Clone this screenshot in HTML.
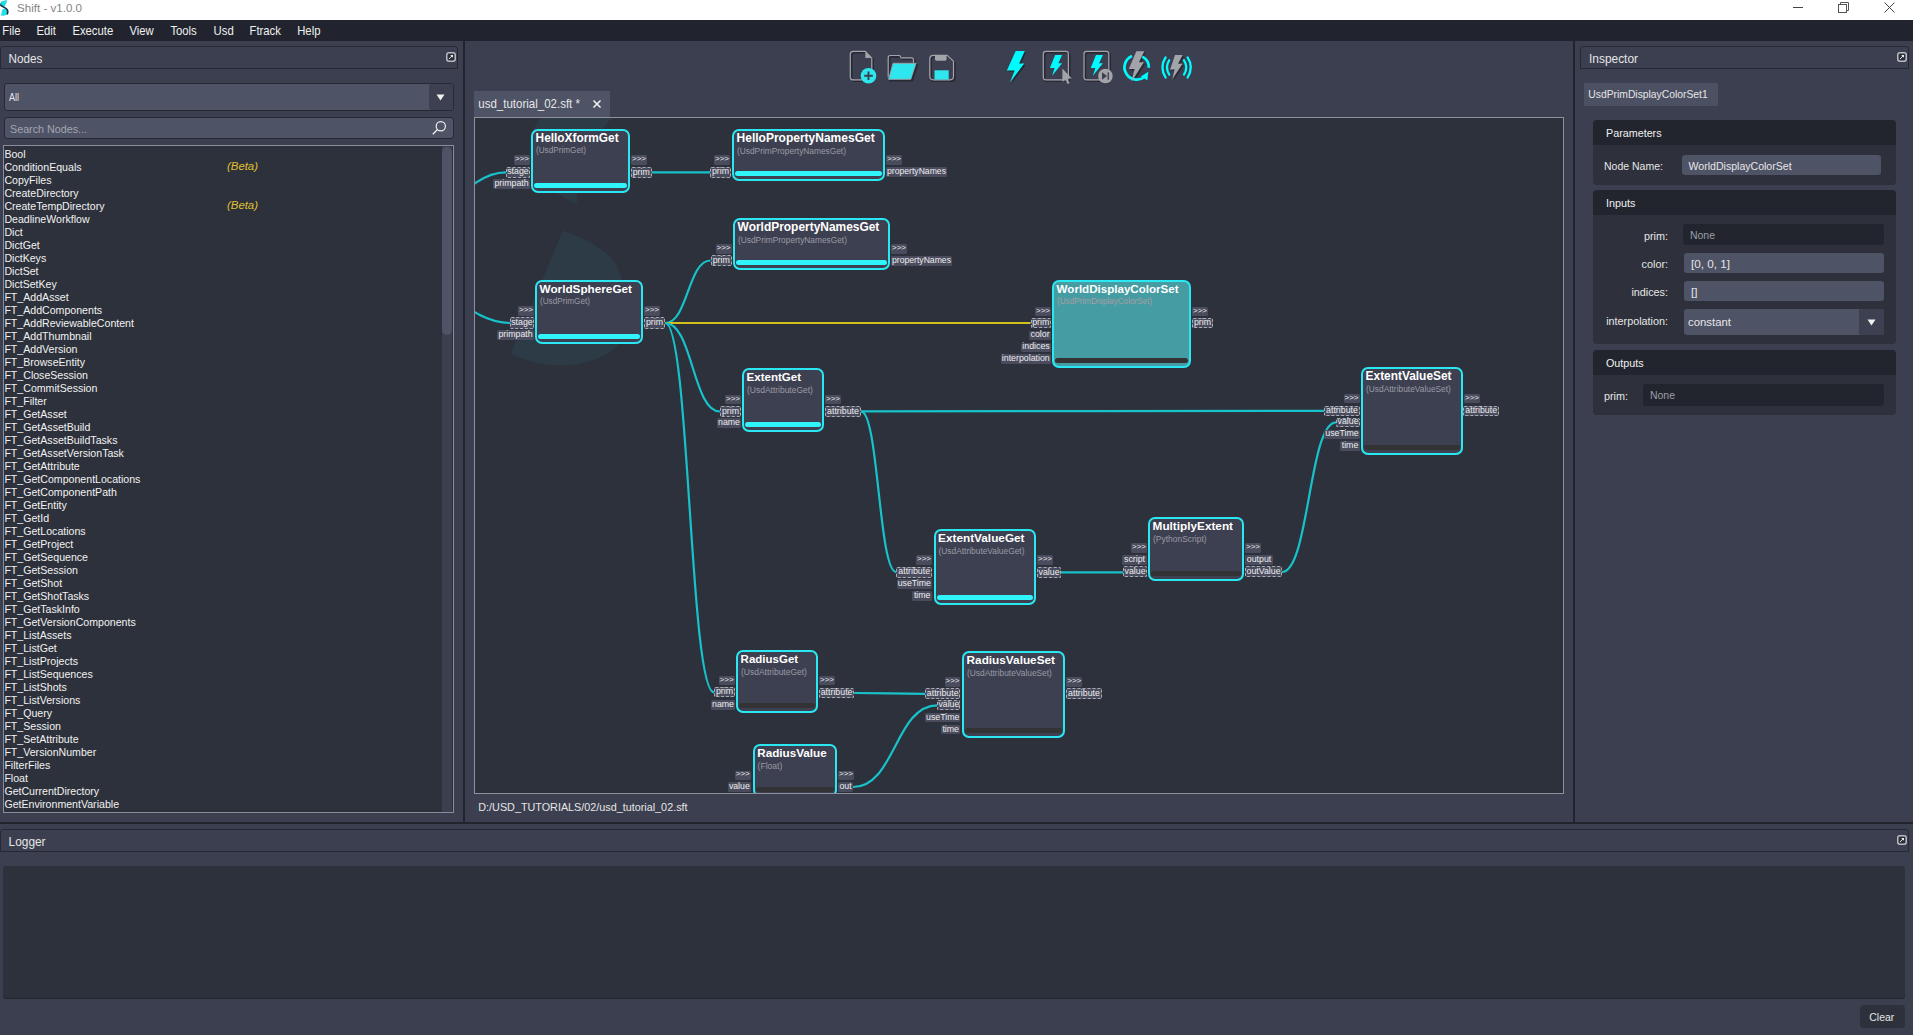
<!DOCTYPE html><html><head><meta charset="utf-8"><style>
html,body{margin:0;padding:0;}
body{width:1913px;height:1035px;position:relative;overflow:hidden;background:#3c3f50;font-family:"Liberation Sans",sans-serif;}
.t{position:absolute;white-space:nowrap;}
.r{position:absolute;}
</style></head><body>
<div class="r" style="left:0px;top:0px;width:1913px;height:20px;background:#ffffff;"></div>
<svg class="r" style="left:0;top:0" width="10" height="17" viewBox="0 0 10 17">
<path d="M1.3 1.2 L6.9 0 L6.6 2.5 L4.6 6.8 L1.2 5.6 L0.9 3 Z" fill="#23dbe6"/>
<path d="M2.4 9.2 L6.2 8.6 L7.9 11.2 L7.2 14.6 L3.2 16.1 L1 15.2 L1.8 11.5 Z" fill="#22e2ec"/>
<path d="M0 4.6 C2 7.2 7.2 7.6 7.7 10.8 C7.9 12.5 7.5 13.6 7 14.4" fill="none" stroke="#1d2f3a" stroke-width="1.6"/>
<path d="M0 3 L1.5 3.5 L1.2 5.6 L0 5.2 Z" fill="#1b8f98"/>
</svg>
<div class="t" style="left:17.00px;top:3.10px;font-size:11.58px;line-height:11.58px;color:#858585;">Shift - v1.0.0</div>
<svg class="r" style="left:1785px;top:0" width="120" height="20" viewBox="0 0 120 20">
<line x1="8" y1="7.5" x2="18" y2="7.5" stroke="#444" stroke-width="1"/>
<rect x="53.5" y="4.5" width="8" height="8" fill="none" stroke="#555" stroke-width="1"/>
<path d="M55.5 4.5 V2.5 H63.5 V10.5 H61.5" fill="none" stroke="#555" stroke-width="1"/>
<path d="M99.5 2.5 L109.5 12.5 M109.5 2.5 L99.5 12.5" stroke="#444" stroke-width="1"/>
</svg>
<div class="r" style="left:0px;top:20px;width:1913px;height:21px;background:#21242e;"></div>
<div class="t" style="left:2.30px;top:25.53px;font-size:11.30px;line-height:11.30px;color:#f0f0f0;transform:scale(1.000,1.1);transform-origin:0 9.57px;">File</div>
<div class="t" style="left:36.40px;top:25.53px;font-size:11.30px;line-height:11.30px;color:#f0f0f0;transform:scale(1.000,1.1);transform-origin:0 9.57px;">Edit</div>
<div class="t" style="left:72.40px;top:25.53px;font-size:11.30px;line-height:11.30px;color:#f0f0f0;transform:scale(1.000,1.1);transform-origin:0 9.57px;">Execute</div>
<div class="t" style="left:129.40px;top:25.53px;font-size:11.30px;line-height:11.30px;color:#f0f0f0;transform:scale(1.000,1.1);transform-origin:0 9.57px;">View</div>
<div class="t" style="left:170.40px;top:25.53px;font-size:11.30px;line-height:11.30px;color:#f0f0f0;transform:scale(1.000,1.1);transform-origin:0 9.57px;">Tools</div>
<div class="t" style="left:213.60px;top:25.53px;font-size:11.30px;line-height:11.30px;color:#f0f0f0;transform:scale(1.000,1.1);transform-origin:0 9.57px;">Usd</div>
<div class="t" style="left:249.50px;top:25.53px;font-size:11.30px;line-height:11.30px;color:#f0f0f0;transform:scale(1.000,1.1);transform-origin:0 9.57px;">Ftrack</div>
<div class="t" style="left:297.20px;top:25.53px;font-size:11.30px;line-height:11.30px;color:#f0f0f0;transform:scale(1.000,1.1);transform-origin:0 9.57px;">Help</div>
<div class="r" style="left:463px;top:41px;width:2px;height:781px;background:#21242d;"></div>
<div class="r" style="left:1573px;top:41px;width:2px;height:781px;background:#21242d;"></div>
<div class="r" style="left:0px;top:822px;width:1913px;height:2px;background:#21242d;"></div>
<div class="r" style="left:0px;top:46px;width:456px;height:21px;border:1px solid #262833;border-radius:3px 3px 0 0;"></div>
<div class="t" style="left:8.60px;top:53.20px;font-size:11.69px;line-height:11.69px;color:#e6e6e6;transform:scale(1.000,1.1);transform-origin:0 9.90px;">Nodes</div>
<svg class="r" style="left:446px;top:52px" width="10" height="10" viewBox="0 0 10 10"><rect x="0.75" y="0.75" width="8.5" height="8.5" rx="2.2" fill="#2c2e39" stroke="#babcc3" stroke-width="1.5"/><path d="M2.9 7.1 L6.2 3.8" fill="none" stroke="#e6e6ea" stroke-width="1"/><path d="M4.2 3 H7 V5.8 Z" fill="#e8f0ee"/></svg>
<div class="r" style="left:4px;top:83px;width:448px;height:26px;border:1px solid #262833;border-radius:3px;background:#4f5366;overflow:hidden"><div class="r" style="left:424px;top:0;width:24px;height:26px;border-radius:3px 0 0 3px;background:#3d4051"></div></div>
<svg class="r" style="left:436px;top:94px" width="9" height="7" viewBox="0 0 9 7"><path d="M0.5 0.5 H8.5 L4.5 6.5 Z" fill="#f0f0f0"/></svg>
<div class="t" style="left:9.20px;top:92.15px;font-size:11.52px;line-height:11.52px;color:#e6e6e6;transform:scale(0.789,1.0);transform-origin:0 9.75px;">All</div>
<div class="r" style="left:4px;top:117px;width:448px;height:20px;border:1px solid #262833;border-radius:3px;background:#4f5366"></div>
<div class="t" style="left:10.30px;top:123.51px;font-size:10.97px;line-height:10.97px;color:#a3a6b0;transform:scale(0.979,1.0);transform-origin:0 9.29px;">Search Nodes...</div>
<svg class="r" style="left:431px;top:120px" width="16" height="16" viewBox="0 0 16 16"><circle cx="9.8" cy="6.2" r="4.6" fill="none" stroke="#f0f0f0" stroke-width="1.2"/><line x1="6.5" y1="9.5" x2="1.8" y2="14.2" stroke="#f0f0f0" stroke-width="1.3"/></svg>
<div class="r" style="left:3px;top:145px;width:449px;height:666px;border:1px solid #8a8d97;background:#2d313b"></div>
<div class="r" style="left:442px;top:146px;width:10px;height:666px;background:#3c3f50;"></div>
<div class="r" style="left:442px;top:147px;width:10px;height:188px;border-radius:5px;background:#4f5366"></div>
<div class="t" style="left:4.40px;top:149.03px;font-size:10.60px;line-height:10.60px;color:#f2f2f2;letter-spacing:0px;">Bool</div>
<div class="t" style="left:4.40px;top:162.03px;font-size:10.60px;line-height:10.60px;color:#f2f2f2;letter-spacing:0px;">ConditionEquals</div>
<div class="t" style="left:4.40px;top:175.03px;font-size:10.60px;line-height:10.60px;color:#f2f2f2;letter-spacing:0px;">CopyFiles</div>
<div class="t" style="left:4.40px;top:188.03px;font-size:10.60px;line-height:10.60px;color:#f2f2f2;letter-spacing:0px;">CreateDirectory</div>
<div class="t" style="left:4.40px;top:201.03px;font-size:10.60px;line-height:10.60px;color:#f2f2f2;letter-spacing:0px;">CreateTempDirectory</div>
<div class="t" style="left:4.40px;top:214.03px;font-size:10.60px;line-height:10.60px;color:#f2f2f2;letter-spacing:0px;">DeadlineWorkflow</div>
<div class="t" style="left:4.40px;top:227.03px;font-size:10.60px;line-height:10.60px;color:#f2f2f2;letter-spacing:0px;">Dict</div>
<div class="t" style="left:4.40px;top:240.03px;font-size:10.60px;line-height:10.60px;color:#f2f2f2;letter-spacing:0px;">DictGet</div>
<div class="t" style="left:4.40px;top:253.03px;font-size:10.60px;line-height:10.60px;color:#f2f2f2;letter-spacing:0px;">DictKeys</div>
<div class="t" style="left:4.40px;top:266.03px;font-size:10.60px;line-height:10.60px;color:#f2f2f2;letter-spacing:0px;">DictSet</div>
<div class="t" style="left:4.40px;top:279.03px;font-size:10.60px;line-height:10.60px;color:#f2f2f2;letter-spacing:0px;">DictSetKey</div>
<div class="t" style="left:4.40px;top:292.03px;font-size:10.60px;line-height:10.60px;color:#f2f2f2;letter-spacing:0px;">FT_AddAsset</div>
<div class="t" style="left:4.40px;top:305.03px;font-size:10.60px;line-height:10.60px;color:#f2f2f2;letter-spacing:0px;">FT_AddComponents</div>
<div class="t" style="left:4.40px;top:318.03px;font-size:10.60px;line-height:10.60px;color:#f2f2f2;letter-spacing:0px;">FT_AddReviewableContent</div>
<div class="t" style="left:4.40px;top:331.03px;font-size:10.60px;line-height:10.60px;color:#f2f2f2;letter-spacing:0px;">FT_AddThumbnail</div>
<div class="t" style="left:4.40px;top:344.03px;font-size:10.60px;line-height:10.60px;color:#f2f2f2;letter-spacing:0px;">FT_AddVersion</div>
<div class="t" style="left:4.40px;top:357.03px;font-size:10.60px;line-height:10.60px;color:#f2f2f2;letter-spacing:0px;">FT_BrowseEntity</div>
<div class="t" style="left:4.40px;top:370.03px;font-size:10.60px;line-height:10.60px;color:#f2f2f2;letter-spacing:0px;">FT_CloseSession</div>
<div class="t" style="left:4.40px;top:383.03px;font-size:10.60px;line-height:10.60px;color:#f2f2f2;letter-spacing:0px;">FT_CommitSession</div>
<div class="t" style="left:4.40px;top:396.03px;font-size:10.60px;line-height:10.60px;color:#f2f2f2;letter-spacing:0px;">FT_Filter</div>
<div class="t" style="left:4.40px;top:409.03px;font-size:10.60px;line-height:10.60px;color:#f2f2f2;letter-spacing:0px;">FT_GetAsset</div>
<div class="t" style="left:4.40px;top:422.03px;font-size:10.60px;line-height:10.60px;color:#f2f2f2;letter-spacing:0px;">FT_GetAssetBuild</div>
<div class="t" style="left:4.40px;top:435.03px;font-size:10.60px;line-height:10.60px;color:#f2f2f2;letter-spacing:0px;">FT_GetAssetBuildTasks</div>
<div class="t" style="left:4.40px;top:448.03px;font-size:10.60px;line-height:10.60px;color:#f2f2f2;letter-spacing:0px;">FT_GetAssetVersionTask</div>
<div class="t" style="left:4.40px;top:461.03px;font-size:10.60px;line-height:10.60px;color:#f2f2f2;letter-spacing:0px;">FT_GetAttribute</div>
<div class="t" style="left:4.40px;top:474.03px;font-size:10.60px;line-height:10.60px;color:#f2f2f2;letter-spacing:0px;">FT_GetComponentLocations</div>
<div class="t" style="left:4.40px;top:487.03px;font-size:10.60px;line-height:10.60px;color:#f2f2f2;letter-spacing:0px;">FT_GetComponentPath</div>
<div class="t" style="left:4.40px;top:500.03px;font-size:10.60px;line-height:10.60px;color:#f2f2f2;letter-spacing:0px;">FT_GetEntity</div>
<div class="t" style="left:4.40px;top:513.03px;font-size:10.60px;line-height:10.60px;color:#f2f2f2;letter-spacing:0px;">FT_GetId</div>
<div class="t" style="left:4.40px;top:526.03px;font-size:10.60px;line-height:10.60px;color:#f2f2f2;letter-spacing:0px;">FT_GetLocations</div>
<div class="t" style="left:4.40px;top:539.03px;font-size:10.60px;line-height:10.60px;color:#f2f2f2;letter-spacing:0px;">FT_GetProject</div>
<div class="t" style="left:4.40px;top:552.03px;font-size:10.60px;line-height:10.60px;color:#f2f2f2;letter-spacing:0px;">FT_GetSequence</div>
<div class="t" style="left:4.40px;top:565.03px;font-size:10.60px;line-height:10.60px;color:#f2f2f2;letter-spacing:0px;">FT_GetSession</div>
<div class="t" style="left:4.40px;top:578.03px;font-size:10.60px;line-height:10.60px;color:#f2f2f2;letter-spacing:0px;">FT_GetShot</div>
<div class="t" style="left:4.40px;top:591.03px;font-size:10.60px;line-height:10.60px;color:#f2f2f2;letter-spacing:0px;">FT_GetShotTasks</div>
<div class="t" style="left:4.40px;top:604.03px;font-size:10.60px;line-height:10.60px;color:#f2f2f2;letter-spacing:0px;">FT_GetTaskInfo</div>
<div class="t" style="left:4.40px;top:617.03px;font-size:10.60px;line-height:10.60px;color:#f2f2f2;letter-spacing:0px;">FT_GetVersionComponents</div>
<div class="t" style="left:4.40px;top:630.03px;font-size:10.60px;line-height:10.60px;color:#f2f2f2;letter-spacing:0px;">FT_ListAssets</div>
<div class="t" style="left:4.40px;top:643.03px;font-size:10.60px;line-height:10.60px;color:#f2f2f2;letter-spacing:0px;">FT_ListGet</div>
<div class="t" style="left:4.40px;top:656.03px;font-size:10.60px;line-height:10.60px;color:#f2f2f2;letter-spacing:0px;">FT_ListProjects</div>
<div class="t" style="left:4.40px;top:669.03px;font-size:10.60px;line-height:10.60px;color:#f2f2f2;letter-spacing:0px;">FT_ListSequences</div>
<div class="t" style="left:4.40px;top:682.03px;font-size:10.60px;line-height:10.60px;color:#f2f2f2;letter-spacing:0px;">FT_ListShots</div>
<div class="t" style="left:4.40px;top:695.03px;font-size:10.60px;line-height:10.60px;color:#f2f2f2;letter-spacing:0px;">FT_ListVersions</div>
<div class="t" style="left:4.40px;top:708.03px;font-size:10.60px;line-height:10.60px;color:#f2f2f2;letter-spacing:0px;">FT_Query</div>
<div class="t" style="left:4.40px;top:721.03px;font-size:10.60px;line-height:10.60px;color:#f2f2f2;letter-spacing:0px;">FT_Session</div>
<div class="t" style="left:4.40px;top:734.03px;font-size:10.60px;line-height:10.60px;color:#f2f2f2;letter-spacing:0px;">FT_SetAttribute</div>
<div class="t" style="left:4.40px;top:747.03px;font-size:10.60px;line-height:10.60px;color:#f2f2f2;letter-spacing:0px;">FT_VersionNumber</div>
<div class="t" style="left:4.40px;top:760.03px;font-size:10.60px;line-height:10.60px;color:#f2f2f2;letter-spacing:0px;">FilterFiles</div>
<div class="t" style="left:4.40px;top:773.03px;font-size:10.60px;line-height:10.60px;color:#f2f2f2;letter-spacing:0px;">Float</div>
<div class="t" style="left:4.40px;top:786.03px;font-size:10.60px;line-height:10.60px;color:#f2f2f2;letter-spacing:0px;">GetCurrentDirectory</div>
<div class="t" style="left:4.40px;top:799.03px;font-size:10.60px;line-height:10.60px;color:#f2f2f2;letter-spacing:0px;">GetEnvironmentVariable</div>
<div class="t" style="left:227.00px;top:161.37px;font-size:11.38px;line-height:11.38px;color:#e0c030;font-style:italic;">(Beta)</div>
<div class="t" style="left:227.00px;top:200.37px;font-size:11.38px;line-height:11.38px;color:#e0c030;font-style:italic;">(Beta)</div>
<svg class="r" style="left:845px;top:45px" width="360" height="45" viewBox="845 45 360 45">
<g transform="translate(1.4,1.4)" fill="none" stroke="#22242d" stroke-width="1.6" opacity="0.8">
<path d="M853.3 51.3 H865.4 L871.8 57.9 V76.9 Q871.8 79.9 868.8 79.9 H853.3 Q850.3 79.9 850.3 76.9 V54.3 Q850.3 51.3 853.3 51.3 Z"/>
<path d="M888.2 77.3 V57.5 Q888.2 55.5 890.2 55.5 H899.7 L901.2 57.9 H911.5 Q913.5 57.9 913.5 59.9 V62.7"/>
<path d="M893.1 63.3 H916 L910.8 79.3 H888.6 Z" fill="#22242d"/>
<path d="M933.3 55.3 H947.2 L953.5 61.2 V76.3 Q953.5 79.8 950 79.8 H933.3 Q929.8 79.8 929.8 76.3 V58.8 Q929.8 55.3 933.3 55.3 Z"/>
<path d="M1015.7 51 L1024.8 51 L1019.1 63.5 L1024.2 63.5 L1010 82.6 L1014.7 70.4 L1006.9 70.4 Z" fill="#22242d" stroke="none"/>
<rect x="1043.3" y="51.3" width="25.1" height="28.5" rx="2.5"/>
<rect x="1084" y="51.3" width="24.8" height="28.5" rx="2.5"/>
<path d="M1136.3 51.2 L1144.3 51.2 L1139 62.3 L1143.9 62.3 L1131.4 81.9 L1134.6 69 L1128.8 69 Z" fill="#22242d" stroke="none"/>
<path d="M1175 55 L1182.6 55 L1178.1 63.7 L1182.6 63.7 L1172.3 79.2 L1174.6 69.4 L1170.1 69.4 Z" fill="#22242d" stroke="none"/>
</g>
<!-- new file -->
<path d="M853.3 51.3 H865.4 L871.8 57.9 V76.9 Q871.8 79.9 868.8 79.9 H853.3 Q850.3 79.9 850.3 76.9 V54.3 Q850.3 51.3 853.3 51.3 Z" fill="none" stroke="#a3a3aa" stroke-width="1.2"/>
<path d="M865.4 51.6 V58 H871.6 Z" fill="#a3a3aa"/>
<circle cx="868.5" cy="75.8" r="7.8" fill="#2ee6ee"/>
<path d="M868.5 71.5 V80.1 M864.2 75.8 H872.8" stroke="#3c3f50" stroke-width="1.9"/>
<!-- folder -->
<path d="M888.2 77.3 V57.5 Q888.2 55.5 890.2 55.5 H899.7 L901.2 57.9 H911.5 Q913.5 57.9 913.5 59.9 V62.7" fill="none" stroke="#a3a3aa" stroke-width="1.2"/>
<path d="M893.1 63.3 H916 L910.8 79.3 H888.6 Z" fill="#2ee6ee" stroke="#a3a3aa" stroke-width="0.9" stroke-linejoin="round"/>
<!-- save -->
<path d="M933.3 55.3 H947.2 L953.5 61.2 V76.3 Q953.5 79.8 950 79.8 H933.3 Q929.8 79.8 929.8 76.3 V58.8 Q929.8 55.3 933.3 55.3 Z" fill="none" stroke="#a3a3aa" stroke-width="1.2"/>
<path d="M934.9 55.3 H946.6 V59 Q946.6 60.8 944.8 60.8 H936.7 Q934.9 60.8 934.9 59 Z" fill="#a3a3aa"/>
<rect x="934.5" y="70.3" width="14.2" height="9.2" fill="#2ee6ee"/>
<!-- lightning -->
<path d="M1015.7 51 L1024.8 51 L1019.1 63.5 L1024.2 63.5 L1010 82.6 L1014.7 70.4 L1006.9 70.4 Z" fill="#00fbff"/>
<!-- box lightning cursor -->
<rect x="1043.3" y="51.3" width="25.1" height="28.5" rx="2.5" fill="none" stroke="#a3a3aa" stroke-width="1.2"/>
<path d="M1055.2 55 L1062.1 55 L1058.3 63.2 L1062.1 63.2 L1052.1 75.7 L1054.6 67.9 L1049.9 67.9 Z" fill="#00fbff"/>
<path d="M1062.4 68.5 V82 L1065.3 79.3 L1067.6 84 L1069.6 83 L1067.4 78.5 L1071.8 78.5 Z" fill="#a3a3aa"/>
<!-- box lightning play -->
<rect x="1084" y="51.3" width="24.8" height="28.5" rx="2.5" fill="none" stroke="#a3a3aa" stroke-width="1.2"/>
<g transform="translate(40.8,0)"><path d="M1055.2 55 L1062.1 55 L1058.3 63.2 L1062.1 63.2 L1052.1 75.7 L1054.6 67.9 L1049.9 67.9 Z" fill="#00fbff"/></g>
<circle cx="1105.4" cy="76" r="7.3" fill="#a3a3aa"/>
<path d="M1102 72.3 V79.8 L1107 76 Z" fill="#3c3f50"/>
<rect x="1107.6" y="72.3" width="1.3" height="7.5" fill="#3c3f50"/>
<!-- circular -->
<path d="M1142.3 56.6 A12.2 12.2 0 0 1 1148.8 67.8" fill="none" stroke="#00fbff" stroke-width="2.7"/>
<path d="M1132.0 56.1 A12.2 12.2 0 1 0 1145.7 75.6" fill="none" stroke="#00fbff" stroke-width="2.7"/>
<path d="M1148.3 71.8 L1147.4 80.3 L1140.8 76.6 Z" fill="#00fbff"/>
<path d="M1136.3 51.2 L1144.3 51.2 L1139 62.3 L1143.9 62.3 L1131.4 81.9 L1134.6 69 L1128.8 69 Z" fill="#a3a3aa"/>
<!-- radio -->
<path d="M1165.6 57.4 Q1159.2 67.2 1165.6 77.5" fill="none" stroke="#00fbff" stroke-width="2.3" stroke-linecap="round"/>
<path d="M1169.2 60.3 Q1164.6 67 1169.2 74.6" fill="none" stroke="#00fbff" stroke-width="2.3" stroke-linecap="round"/>
<path d="M1187.6 57.4 Q1194 67.2 1187.6 77.5" fill="none" stroke="#00fbff" stroke-width="2.3" stroke-linecap="round"/>
<path d="M1184 60.3 Q1188.6 67 1184 74.6" fill="none" stroke="#00fbff" stroke-width="2.3" stroke-linecap="round"/>
<path d="M1175 55 L1182.6 55 L1178.1 63.7 L1182.6 63.7 L1172.3 79.2 L1174.6 69.4 L1170.1 69.4 Z" fill="#a3a3aa"/>
</svg>
<div class="r" style="left:474px;top:91px;width:136px;height:26px;background:#4f5366;"></div>
<div class="t" style="left:478.30px;top:98.86px;font-size:11.51px;line-height:11.51px;color:#e6e6e6;transform:scale(1.000,1.05);transform-origin:0 9.74px;">usd_tutorial_02.sft *</div>
<svg class="r" style="left:592px;top:99px" width="10" height="10" viewBox="0 0 10 10"><path d="M1.5 1.5 L8.5 8.5 M8.5 1.5 L1.5 8.5" stroke="#f4f4f4" stroke-width="1.5"/></svg>
<div class="r" style="left:474px;top:117px;width:1088px;height:675px;border:1px solid #8e919b;background:#2d313b;overflow:hidden"><svg class="r" style="left:0;top:0" width="1088" height="675" viewBox="0 0 1088 675"><g transform="translate(-475,-118)" fill="#2c3b46"><path d="M541 118 C522 140 522 180 577 204 C576 170 592 140 612 118 Z"/><path d="M563 230.5 C585 238 610 252 617 266 C628 290 632 320 622 340 C612 356 585 366 558 365.5 C540 365 522 360 511 353 Z"/></g></svg>
<svg class="r" style="left:0;top:0" width="1088" height="675"><path d="M177.0 54.3 C206.0 54.3 206.0 54.3 235.0 54.3" stroke="#17c2ca" stroke-width="2.2" fill="none"/><path d="M190.2 205.0 C212.9 205.0 212.9 142.5 235.5 142.5" stroke="#17c2ca" stroke-width="2.2" fill="none"/><path d="M190.2 205.0 C372.9 205.0 372.9 205.0 555.5 205.0" stroke="#d2c01e" stroke-width="2.2" fill="none"/><path d="M190.2 205.0 C217.6 205.0 217.6 293.5 245.0 293.5" stroke="#17c2ca" stroke-width="2.2" fill="none"/><path d="M190.2 205.0 C214.6 205.0 214.6 574.3 239.0 574.3" stroke="#17c2ca" stroke-width="2.2" fill="none"/><path d="M386.0 293.3 C617.5 293.3 617.5 292.8 849.0 292.8" stroke="#17c2ca" stroke-width="2.2" fill="none"/><path d="M386.0 293.3 C403.6 293.3 403.6 454.0 421.3 454.0" stroke="#17c2ca" stroke-width="2.2" fill="none"/><path d="M586.0 454.3 C617.0 454.3 617.0 454.3 648.0 454.3" stroke="#17c2ca" stroke-width="2.2" fill="none"/><path d="M807.0 454.0 C834.0 454.0 834.0 304.3 861.0 304.3" stroke="#17c2ca" stroke-width="2.2" fill="none"/><path d="M379.2 575.0 C414.6 575.0 414.6 575.8 450.0 575.8" stroke="#17c2ca" stroke-width="2.2" fill="none"/><path d="M378.0 669.0 C420.2 669.0 420.2 587.3 462.4 587.3" stroke="#17c2ca" stroke-width="2.2" fill="none"/><path d="M-35 97 C-5 67 10 54.30000000000001 31 54.30000000000001" stroke="#17c2ca" stroke-width="2.2" fill="none"/><path d="M-30 172 C-5 194 15 205 35 205" stroke="#17c2ca" stroke-width="2.2" fill="none"/></svg>
<div class="r" style="left:56.0px;top:11.0px;width:95.0px;height:60.0px;border:2px solid #2ae8f2;border-radius:7px;background:#3d4050"></div>
<div class="r" style="left:59.0px;top:65.2px;width:93.0px;height:5px;border-radius:3px;background:#30f4fc"></div>
<div class="t" style="left:60.6px;top:13.0px;font-size:11.86px;line-height:14px;font-weight:bold;color:#ffffff">HelloXformGet</div>
<div class="t" style="left:61.0px;top:27.5px;font-size:8.18px;line-height:10px;color:#9a9ba6">(UsdPrimGet)</div>
<div class="r" style="left:39.0px;top:37.0px;width:16.0px;height:10.0px;background:#4a4c5d;border-radius:1.5px;"></div>
<div class="t" style="left:40.0px;top:36.0px;font-size:7.99px;line-height:10px;color:#ececf0">&gt;&gt;&gt;</div>
<div class="r" style="left:31.0px;top:49.0px;width:22.0px;height:8.5px;background:#4a4c5d;border-radius:1.5px;border:1px dashed #a9abb3;"></div>
<div class="t" style="left:32.2px;top:48.2px;font-size:8.80px;line-height:10px;color:#ececf0">stage</div>
<div class="r" style="left:18.0px;top:61.0px;width:37.0px;height:10.0px;background:#4a4c5d;border-radius:1.5px;"></div>
<div class="t" style="left:19.4px;top:60.0px;font-size:8.80px;line-height:10px;color:#ececf0">primpath</div>
<div class="r" style="left:156.0px;top:37.0px;width:16.0px;height:10.0px;background:#4a4c5d;border-radius:1.5px;"></div>
<div class="t" style="left:157.0px;top:36.0px;font-size:7.99px;line-height:10px;color:#ececf0">&gt;&gt;&gt;</div>
<div class="r" style="left:155.5px;top:49.0px;width:19.5px;height:9.0px;background:#4a4c5d;border-radius:1.5px;border:1px dashed #a9abb3;"></div>
<div class="t" style="left:157.7px;top:48.5px;font-size:8.80px;line-height:10px;color:#ececf0">prim</div>
<div class="r" style="left:257.0px;top:11.0px;width:149.0px;height:48.0px;border:2px solid #2ae8f2;border-radius:7px;background:#3d4050"></div>
<div class="r" style="left:260.0px;top:53.2px;width:147.0px;height:5px;border-radius:3px;background:#30f4fc"></div>
<div class="t" style="left:261.6px;top:13.0px;font-size:12.0px;line-height:14px;font-weight:bold;color:#ffffff">HelloPropertyNamesGet</div>
<div class="t" style="left:262.0px;top:27.5px;font-size:8.35px;line-height:10px;color:#9a9ba6">(UsdPrimPropertyNamesGet)</div>
<div class="r" style="left:239.0px;top:37.0px;width:16.0px;height:10.0px;background:#4a4c5d;border-radius:1.5px;"></div>
<div class="t" style="left:240.0px;top:36.0px;font-size:7.99px;line-height:10px;color:#ececf0">&gt;&gt;&gt;</div>
<div class="r" style="left:235.0px;top:48.5px;width:19.0px;height:9.0px;background:#4a4c5d;border-radius:1.5px;border:1px dashed #a9abb3;"></div>
<div class="t" style="left:236.9px;top:48.0px;font-size:8.80px;line-height:10px;color:#ececf0">prim</div>
<div class="r" style="left:411.0px;top:37.0px;width:16.0px;height:10.0px;background:#4a4c5d;border-radius:1.5px;"></div>
<div class="t" style="left:412.0px;top:36.0px;font-size:7.99px;line-height:10px;color:#ececf0">&gt;&gt;&gt;</div>
<div class="r" style="left:411.0px;top:49.0px;width:61.0px;height:10.0px;background:#4a4c5d;border-radius:1.5px;"></div>
<div class="t" style="left:412.0px;top:48.0px;font-size:8.63px;line-height:10px;color:#ececf0">propertyNames</div>
<div class="r" style="left:258.0px;top:100.0px;width:153.0px;height:48.0px;border:2px solid #2ae8f2;border-radius:7px;background:#3d4050"></div>
<div class="r" style="left:261.0px;top:142.2px;width:151.0px;height:5px;border-radius:3px;background:#30f4fc"></div>
<div class="t" style="left:262.6px;top:102.0px;font-size:11.94px;line-height:14px;font-weight:bold;color:#ffffff">WorldPropertyNamesGet</div>
<div class="t" style="left:263.0px;top:116.5px;font-size:8.35px;line-height:10px;color:#9a9ba6">(UsdPrimPropertyNamesGet)</div>
<div class="r" style="left:240.5px;top:126.0px;width:16.0px;height:10.0px;background:#4a4c5d;border-radius:1.5px;"></div>
<div class="t" style="left:241.5px;top:125.0px;font-size:7.99px;line-height:10px;color:#ececf0">&gt;&gt;&gt;</div>
<div class="r" style="left:235.5px;top:137.0px;width:19.5px;height:9.0px;background:#4a4c5d;border-radius:1.5px;border:1px dashed #a9abb3;"></div>
<div class="t" style="left:237.7px;top:136.5px;font-size:8.80px;line-height:10px;color:#ececf0">prim</div>
<div class="r" style="left:416.0px;top:126.0px;width:16.0px;height:10.0px;background:#4a4c5d;border-radius:1.5px;"></div>
<div class="t" style="left:417.0px;top:125.0px;font-size:7.99px;line-height:10px;color:#ececf0">&gt;&gt;&gt;</div>
<div class="r" style="left:416.0px;top:138.0px;width:61.0px;height:10.0px;background:#4a4c5d;border-radius:1.5px;"></div>
<div class="t" style="left:417.0px;top:137.0px;font-size:8.63px;line-height:10px;color:#ececf0">propertyNames</div>
<div class="r" style="left:60.0px;top:162.0px;width:104.0px;height:60.0px;border:2px solid #2ae8f2;border-radius:7px;background:#3d4050"></div>
<div class="r" style="left:63.0px;top:216.2px;width:102.0px;height:5px;border-radius:3px;background:#30f4fc"></div>
<div class="t" style="left:64.6px;top:164.0px;font-size:11.74px;line-height:14px;font-weight:bold;color:#ffffff">WorldSphereGet</div>
<div class="t" style="left:65.0px;top:178.5px;font-size:8.18px;line-height:10px;color:#9a9ba6">(UsdPrimGet)</div>
<div class="r" style="left:43.0px;top:188.0px;width:16.0px;height:9.5px;background:#4a4c5d;border-radius:1.5px;"></div>
<div class="t" style="left:44.0px;top:186.8px;font-size:7.99px;line-height:10px;color:#ececf0">&gt;&gt;&gt;</div>
<div class="r" style="left:35.0px;top:199.0px;width:22.0px;height:10.0px;background:#4a4c5d;border-radius:1.5px;border:1px dashed #a9abb3;"></div>
<div class="t" style="left:36.2px;top:199.0px;font-size:8.80px;line-height:10px;color:#ececf0">stage</div>
<div class="r" style="left:22.0px;top:212.0px;width:37.0px;height:10.0px;background:#4a4c5d;border-radius:1.5px;"></div>
<div class="t" style="left:23.4px;top:211.0px;font-size:8.80px;line-height:10px;color:#ececf0">primpath</div>
<div class="r" style="left:169.0px;top:188.0px;width:16.0px;height:9.5px;background:#4a4c5d;border-radius:1.5px;"></div>
<div class="t" style="left:170.0px;top:186.8px;font-size:7.99px;line-height:10px;color:#ececf0">&gt;&gt;&gt;</div>
<div class="r" style="left:169.0px;top:199.0px;width:19.0px;height:10.0px;background:#4a4c5d;border-radius:1.5px;border:1px dashed #a9abb3;"></div>
<div class="t" style="left:170.9px;top:199.0px;font-size:8.80px;line-height:10px;color:#ececf0">prim</div>
<div class="r" style="left:577.0px;top:162.0px;width:135.0px;height:84.0px;border:2px solid #2ae8f2;border-radius:7px;background:#459ca2"></div>
<div class="r" style="left:580.0px;top:240.2px;width:133.0px;height:5px;border-radius:3px;background:#333336"></div>
<div class="t" style="left:581.6px;top:164.0px;font-size:11.58px;line-height:14px;font-weight:bold;color:#ffffff">WorldDisplayColorSet</div>
<div class="t" style="left:582.0px;top:178.5px;font-size:8.17px;line-height:10px;color:#a89ea4">(UsdPrimDisplayColorSet)</div>
<div class="r" style="left:560.0px;top:189.0px;width:16.0px;height:9.0px;background:#4a4c5d;border-radius:1.5px;"></div>
<div class="t" style="left:561.0px;top:187.5px;font-size:7.99px;line-height:10px;color:#ececf0">&gt;&gt;&gt;</div>
<div class="r" style="left:555.5px;top:200.0px;width:18.5px;height:8.0px;background:#4a4c5d;border-radius:1.5px;border:1px dashed #a9abb3;"></div>
<div class="t" style="left:557.2px;top:199.0px;font-size:8.80px;line-height:10px;color:#ececf0">prim</div>
<div class="r" style="left:554.0px;top:212.5px;width:22.0px;height:9.5px;background:#4a4c5d;border-radius:1.5px;"></div>
<div class="t" style="left:555.5px;top:211.2px;font-size:8.80px;line-height:10px;color:#ececf0">color</div>
<div class="r" style="left:546.0px;top:224.5px;width:30.0px;height:9.5px;background:#4a4c5d;border-radius:1.5px;"></div>
<div class="t" style="left:547.3px;top:223.2px;font-size:8.80px;line-height:10px;color:#ececf0">indices</div>
<div class="r" style="left:525.5px;top:236.3px;width:50.5px;height:9.5px;background:#4a4c5d;border-radius:1.5px;"></div>
<div class="t" style="left:526.8px;top:235.1px;font-size:8.80px;line-height:10px;color:#ececf0">interpolation</div>
<div class="r" style="left:717.0px;top:189.0px;width:16.0px;height:9.0px;background:#4a4c5d;border-radius:1.5px;"></div>
<div class="t" style="left:718.0px;top:187.5px;font-size:7.99px;line-height:10px;color:#ececf0">&gt;&gt;&gt;</div>
<div class="r" style="left:717.0px;top:200.0px;width:19.0px;height:8.0px;background:#4a4c5d;border-radius:1.5px;border:1px dashed #a9abb3;"></div>
<div class="t" style="left:718.9px;top:199.0px;font-size:8.80px;line-height:10px;color:#ececf0">prim</div>
<div class="r" style="left:267.0px;top:250.0px;width:78.0px;height:60.0px;border:2px solid #2ae8f2;border-radius:7px;background:#3d4050"></div>
<div class="r" style="left:270.0px;top:304.2px;width:76.0px;height:5px;border-radius:3px;background:#30f4fc"></div>
<div class="t" style="left:271.6px;top:252.0px;font-size:11.52px;line-height:14px;font-weight:bold;color:#ffffff">ExtentGet</div>
<div class="t" style="left:272.0px;top:266.5px;font-size:8.47px;line-height:10px;color:#9a9ba6">(UsdAttributeGet)</div>
<div class="r" style="left:250.0px;top:277.0px;width:16.0px;height:9.0px;background:#4a4c5d;border-radius:1.5px;"></div>
<div class="t" style="left:251.0px;top:275.5px;font-size:7.99px;line-height:10px;color:#ececf0">&gt;&gt;&gt;</div>
<div class="r" style="left:245.0px;top:288.0px;width:19.0px;height:9.0px;background:#4a4c5d;border-radius:1.5px;border:1px dashed #a9abb3;"></div>
<div class="t" style="left:246.9px;top:287.5px;font-size:8.80px;line-height:10px;color:#ececf0">prim</div>
<div class="r" style="left:242.0px;top:300.0px;width:24.0px;height:10.0px;background:#4a4c5d;border-radius:1.5px;"></div>
<div class="t" style="left:243.0px;top:299.0px;font-size:8.79px;line-height:10px;color:#ececf0">name</div>
<div class="r" style="left:350.0px;top:277.0px;width:16.0px;height:9.0px;background:#4a4c5d;border-radius:1.5px;"></div>
<div class="t" style="left:351.0px;top:275.5px;font-size:7.99px;line-height:10px;color:#ececf0">&gt;&gt;&gt;</div>
<div class="r" style="left:350.0px;top:288.0px;width:34.0px;height:9.0px;background:#4a4c5d;border-radius:1.5px;border:1px dashed #a9abb3;"></div>
<div class="t" style="left:352.1px;top:287.5px;font-size:8.80px;line-height:10px;color:#ececf0">attribute</div>
<div class="r" style="left:886.0px;top:249.0px;width:98.0px;height:84.0px;border:2px solid #2ae8f2;border-radius:7px;background:#3d4050"></div>
<div class="r" style="left:889.0px;top:327.2px;width:96.0px;height:5px;border-radius:3px;background:#333336"></div>
<div class="t" style="left:890.6px;top:251.0px;font-size:11.9px;line-height:14px;font-weight:bold;color:#ffffff">ExtentValueSet</div>
<div class="t" style="left:891.0px;top:265.5px;font-size:8.37px;line-height:10px;color:#9a9ba6">(UsdAttributeValueSet)</div>
<div class="r" style="left:868.5px;top:276.0px;width:16.0px;height:9.0px;background:#4a4c5d;border-radius:1.5px;"></div>
<div class="t" style="left:869.5px;top:274.5px;font-size:7.99px;line-height:10px;color:#ececf0">&gt;&gt;&gt;</div>
<div class="r" style="left:849.0px;top:287.5px;width:34.0px;height:8.5px;background:#4a4c5d;border-radius:1.5px;border:1px dashed #a9abb3;"></div>
<div class="t" style="left:851.1px;top:286.8px;font-size:8.80px;line-height:10px;color:#ececf0">attribute</div>
<div class="r" style="left:861.0px;top:299.5px;width:22.0px;height:7.5px;background:#4a4c5d;border-radius:1.5px;border:1px dashed #a9abb3;"></div>
<div class="t" style="left:862.5px;top:298.2px;font-size:8.80px;line-height:10px;color:#ececf0">value</div>
<div class="r" style="left:849.0px;top:311.6px;width:36.0px;height:9.4px;background:#4a4c5d;border-radius:1.5px;"></div>
<div class="t" style="left:850.3px;top:310.3px;font-size:8.80px;line-height:10px;color:#ececf0">useTime</div>
<div class="r" style="left:865.0px;top:323.4px;width:20.0px;height:9.6px;background:#4a4c5d;border-radius:1.5px;"></div>
<div class="t" style="left:866.7px;top:322.2px;font-size:8.80px;line-height:10px;color:#ececf0">time</div>
<div class="r" style="left:989.0px;top:276.0px;width:16.0px;height:9.0px;background:#4a4c5d;border-radius:1.5px;"></div>
<div class="t" style="left:990.0px;top:274.5px;font-size:7.99px;line-height:10px;color:#ececf0">&gt;&gt;&gt;</div>
<div class="r" style="left:988.3px;top:287.5px;width:33.7px;height:8.5px;background:#4a4c5d;border-radius:1.5px;border:1px dashed #a9abb3;"></div>
<div class="t" style="left:990.3px;top:286.8px;font-size:8.80px;line-height:10px;color:#ececf0">attribute</div>
<div class="r" style="left:458.5px;top:411.0px;width:98.5px;height:72.0px;border:2px solid #2ae8f2;border-radius:7px;background:#3d4050"></div>
<div class="r" style="left:461.5px;top:477.2px;width:96.5px;height:5px;border-radius:3px;background:#30f4fc"></div>
<div class="t" style="left:463.1px;top:413.0px;font-size:11.79px;line-height:14px;font-weight:bold;color:#ffffff">ExtentValueGet</div>
<div class="t" style="left:463.5px;top:427.5px;font-size:8.38px;line-height:10px;color:#9a9ba6">(UsdAttributeValueGet)</div>
<div class="r" style="left:441.0px;top:437.4px;width:16.0px;height:9.2px;background:#4a4c5d;border-radius:1.5px;"></div>
<div class="t" style="left:442.0px;top:436.0px;font-size:7.99px;line-height:10px;color:#ececf0">&gt;&gt;&gt;</div>
<div class="r" style="left:421.3px;top:448.6px;width:33.7px;height:9.0px;background:#4a4c5d;border-radius:1.5px;border:1px dashed #a9abb3;"></div>
<div class="t" style="left:423.3px;top:448.1px;font-size:8.80px;line-height:10px;color:#ececf0">attribute</div>
<div class="r" style="left:421.7px;top:461.2px;width:35.3px;height:9.8px;background:#4a4c5d;border-radius:1.5px;"></div>
<div class="t" style="left:422.7px;top:460.1px;font-size:8.77px;line-height:10px;color:#ececf0">useTime</div>
<div class="r" style="left:437.4px;top:473.0px;width:19.6px;height:10.0px;background:#4a4c5d;border-radius:1.5px;"></div>
<div class="t" style="left:438.9px;top:472.0px;font-size:8.80px;line-height:10px;color:#ececf0">time</div>
<div class="r" style="left:562.0px;top:437.4px;width:16.0px;height:9.2px;background:#4a4c5d;border-radius:1.5px;"></div>
<div class="t" style="left:563.0px;top:436.0px;font-size:7.99px;line-height:10px;color:#ececf0">&gt;&gt;&gt;</div>
<div class="r" style="left:562.0px;top:449.0px;width:22.0px;height:9.0px;background:#4a4c5d;border-radius:1.5px;border:1px dashed #a9abb3;"></div>
<div class="t" style="left:563.5px;top:448.5px;font-size:8.80px;line-height:10px;color:#ececf0">value</div>
<div class="r" style="left:673.0px;top:399.0px;width:92.0px;height:60.0px;border:2px solid #2ae8f2;border-radius:7px;background:#3d4050"></div>
<div class="r" style="left:676.0px;top:453.2px;width:90.0px;height:5px;border-radius:3px;background:#333336"></div>
<div class="t" style="left:677.6px;top:401.0px;font-size:11.77px;line-height:14px;font-weight:bold;color:#ffffff">MultiplyExtent</div>
<div class="t" style="left:678.0px;top:415.5px;font-size:8.46px;line-height:10px;color:#9a9ba6">(PythonScript)</div>
<div class="r" style="left:656.0px;top:425.0px;width:16.0px;height:10.0px;background:#4a4c5d;border-radius:1.5px;"></div>
<div class="t" style="left:657.0px;top:424.0px;font-size:7.99px;line-height:10px;color:#ececf0">&gt;&gt;&gt;</div>
<div class="r" style="left:647.0px;top:437.4px;width:25.0px;height:9.2px;background:#4a4c5d;border-radius:1.5px;"></div>
<div class="t" style="left:649.0px;top:436.0px;font-size:8.80px;line-height:10px;color:#ececf0">script</div>
<div class="r" style="left:648.0px;top:448.4px;width:22.0px;height:9.1px;background:#4a4c5d;border-radius:1.5px;border:1px dashed #a9abb3;"></div>
<div class="t" style="left:649.5px;top:448.0px;font-size:8.80px;line-height:10px;color:#ececf0">value</div>
<div class="r" style="left:770.0px;top:425.0px;width:16.0px;height:10.0px;background:#4a4c5d;border-radius:1.5px;"></div>
<div class="t" style="left:771.0px;top:424.0px;font-size:7.99px;line-height:10px;color:#ececf0">&gt;&gt;&gt;</div>
<div class="r" style="left:770.0px;top:437.4px;width:28.0px;height:9.2px;background:#4a4c5d;border-radius:1.5px;"></div>
<div class="t" style="left:771.8px;top:436.0px;font-size:8.80px;line-height:10px;color:#ececf0">output</div>
<div class="r" style="left:770.0px;top:448.4px;width:35.0px;height:9.1px;background:#4a4c5d;border-radius:1.5px;border:1px dashed #a9abb3;"></div>
<div class="t" style="left:771.5px;top:448.0px;font-size:8.80px;line-height:10px;color:#ececf0">outValue</div>
<div class="r" style="left:261.0px;top:532.0px;width:78.0px;height:59.0px;border:2px solid #2ae8f2;border-radius:7px;background:#3d4050"></div>
<div class="r" style="left:264.0px;top:585.2px;width:76.0px;height:5px;border-radius:3px;background:#333336"></div>
<div class="t" style="left:265.6px;top:534.0px;font-size:11.5px;line-height:14px;font-weight:bold;color:#ffffff">RadiusGet</div>
<div class="t" style="left:266.0px;top:548.5px;font-size:8.47px;line-height:10px;color:#9a9ba6">(UsdAttributeGet)</div>
<div class="r" style="left:243.6px;top:558.3px;width:16.2px;height:8.8px;background:#4a4c5d;border-radius:1.5px;"></div>
<div class="t" style="left:244.6px;top:556.7px;font-size:8.11px;line-height:10px;color:#ececf0">&gt;&gt;&gt;</div>
<div class="r" style="left:239.0px;top:569.2px;width:19.0px;height:8.3px;background:#4a4c5d;border-radius:1.5px;border:1px dashed #a9abb3;"></div>
<div class="t" style="left:240.9px;top:568.4px;font-size:8.80px;line-height:10px;color:#ececf0">prim</div>
<div class="r" style="left:236.0px;top:581.5px;width:24.0px;height:10.1px;background:#4a4c5d;border-radius:1.5px;"></div>
<div class="t" style="left:237.0px;top:580.5px;font-size:8.79px;line-height:10px;color:#ececf0">name</div>
<div class="r" style="left:344.0px;top:558.3px;width:16.0px;height:8.8px;background:#4a4c5d;border-radius:1.5px;"></div>
<div class="t" style="left:345.0px;top:556.7px;font-size:7.99px;line-height:10px;color:#ececf0">&gt;&gt;&gt;</div>
<div class="r" style="left:344.0px;top:570.0px;width:33.2px;height:8.0px;background:#4a4c5d;border-radius:1.5px;border:1px dashed #a9abb3;"></div>
<div class="t" style="left:345.7px;top:569.0px;font-size:8.80px;line-height:10px;color:#ececf0">attribute</div>
<div class="r" style="left:487.0px;top:533.0px;width:99.0px;height:83.0px;border:2px solid #2ae8f2;border-radius:7px;background:#3d4050"></div>
<div class="r" style="left:490.0px;top:610.2px;width:97.0px;height:5px;border-radius:3px;background:#333336"></div>
<div class="t" style="left:491.6px;top:535.0px;font-size:11.79px;line-height:14px;font-weight:bold;color:#ffffff">RadiusValueSet</div>
<div class="t" style="left:492.0px;top:549.5px;font-size:8.37px;line-height:10px;color:#9a9ba6">(UsdAttributeValueSet)</div>
<div class="r" style="left:469.6px;top:559.0px;width:15.8px;height:9.6px;background:#4a4c5d;border-radius:1.5px;"></div>
<div class="t" style="left:470.6px;top:557.8px;font-size:7.88px;line-height:10px;color:#ececf0">&gt;&gt;&gt;</div>
<div class="r" style="left:450.0px;top:570.3px;width:33.4px;height:8.9px;background:#4a4c5d;border-radius:1.5px;border:1px dashed #a9abb3;"></div>
<div class="t" style="left:451.8px;top:569.8px;font-size:8.80px;line-height:10px;color:#ececf0">attribute</div>
<div class="r" style="left:462.4px;top:582.4px;width:21.0px;height:7.8px;background:#4a4c5d;border-radius:1.5px;border:1px dashed #a9abb3;"></div>
<div class="t" style="left:463.4px;top:581.3px;font-size:8.78px;line-height:10px;color:#ececf0">value</div>
<div class="r" style="left:450.0px;top:594.7px;width:35.4px;height:9.5px;background:#4a4c5d;border-radius:1.5px;"></div>
<div class="t" style="left:451.0px;top:593.5px;font-size:8.80px;line-height:10px;color:#ececf0">useTime</div>
<div class="r" style="left:466.0px;top:606.9px;width:19.4px;height:9.4px;background:#4a4c5d;border-radius:1.5px;"></div>
<div class="t" style="left:467.4px;top:605.6px;font-size:8.80px;line-height:10px;color:#ececf0">time</div>
<div class="r" style="left:591.2px;top:559.0px;width:16.1px;height:9.6px;background:#4a4c5d;border-radius:1.5px;"></div>
<div class="t" style="left:592.2px;top:557.8px;font-size:8.05px;line-height:10px;color:#ececf0">&gt;&gt;&gt;</div>
<div class="r" style="left:591.2px;top:570.3px;width:33.6px;height:8.9px;background:#4a4c5d;border-radius:1.5px;border:1px dashed #a9abb3;"></div>
<div class="t" style="left:593.1px;top:569.8px;font-size:8.80px;line-height:10px;color:#ececf0">attribute</div>
<div class="r" style="left:277.6px;top:626.4px;width:80.0px;height:48.6px;border:2px solid #2ae8f2;border-radius:7px;background:#3d4050"></div>
<div class="r" style="left:280.6px;top:669.2px;width:78.0px;height:5px;border-radius:3px;background:#333336"></div>
<div class="t" style="left:282.2px;top:628.4px;font-size:11.69px;line-height:14px;font-weight:bold;color:#ffffff">RadiusValue</div>
<div class="t" style="left:282.6px;top:642.9px;font-size:8.55px;line-height:10px;color:#9a9ba6">(Float)</div>
<div class="r" style="left:259.8px;top:652.6px;width:16.0px;height:9.4px;background:#4a4c5d;border-radius:1.5px;"></div>
<div class="t" style="left:260.8px;top:651.3px;font-size:7.99px;line-height:10px;color:#ececf0">&gt;&gt;&gt;</div>
<div class="r" style="left:252.9px;top:664.2px;width:22.9px;height:9.6px;background:#4a4c5d;border-radius:1.5px;"></div>
<div class="t" style="left:253.9px;top:663.0px;font-size:8.74px;line-height:10px;color:#ececf0">value</div>
<div class="r" style="left:363.0px;top:652.6px;width:15.9px;height:9.4px;background:#4a4c5d;border-radius:1.5px;"></div>
<div class="t" style="left:364.0px;top:651.3px;font-size:7.93px;line-height:10px;color:#ececf0">&gt;&gt;&gt;</div>
<div class="r" style="left:363.0px;top:664.2px;width:15.0px;height:9.6px;background:#4a4c5d;border-radius:1.5px;"></div>
<div class="t" style="left:364.4px;top:663.0px;font-size:8.80px;line-height:10px;color:#ececf0">out</div></div>
<div class="t" style="left:478.30px;top:802.06px;font-size:10.80px;line-height:10.80px;color:#e6e6e6;">D:/USD_TUTORIALS/02/usd_tutorial_02.sft</div>
<div class="r" style="left:1580px;top:46px;width:327px;height:21px;border:1px solid #262833;border-radius:3px 3px 0 0;"></div>
<div class="t" style="left:1589.00px;top:53.92px;font-size:11.91px;line-height:11.91px;color:#e6e6e6;transform:scale(1.000,1.08);transform-origin:0 10.08px;">Inspector</div>
<svg class="r" style="left:1897px;top:52px" width="10" height="10" viewBox="0 0 10 10"><rect x="0.75" y="0.75" width="8.5" height="8.5" rx="2.2" fill="#2c2e39" stroke="#babcc3" stroke-width="1.5"/><path d="M2.9 7.1 L6.2 3.8" fill="none" stroke="#e6e6ea" stroke-width="1"/><path d="M4.2 3 H7 V5.8 Z" fill="#e8f0ee"/></svg>
<div class="r" style="left:1584px;top:83px;width:134px;height:23px;background:#4c5063;"></div>
<div class="t" style="left:1588.30px;top:90.26px;font-size:10.33px;line-height:10.33px;color:#e6e6e6;">UsdPrimDisplayColorSet1</div>
<div class="r" style="left:1593px;top:120px;width:303px;height:65px;border-radius:4px;background:#2e313c;overflow:hidden"><div class="r" style="left:0;top:0;width:303px;height:25px;background:#22252e"></div></div>
<div class="t" style="left:1606.00px;top:127.90px;font-size:10.75px;line-height:10.75px;color:#f0f0f0;">Parameters</div>
<div class="t" style="left:1604.00px;top:161.10px;font-size:10.51px;line-height:10.51px;color:#e6e6e6;">Node Name:</div>
<div class="r" style="left:1682px;top:155px;width:199px;height:20px;border-radius:3px;background:#4f5366"></div>
<div class="t" style="left:1688.60px;top:161.07px;font-size:10.55px;line-height:10.55px;color:#e6e6e6;">WorldDisplayColorSet</div>
<div class="r" style="left:1593px;top:190px;width:303px;height:154px;border-radius:4px;background:#2e313c;overflow:hidden"><div class="r" style="left:0;top:0;width:303px;height:25px;background:#22252e"></div></div>
<div class="t" style="left:1606.00px;top:197.90px;font-size:10.75px;line-height:10.75px;color:#f0f0f0;">Inputs</div>
<div class="t" style="left:1644.00px;top:230.86px;font-size:10.80px;line-height:10.80px;color:#e6e6e6;">prim:</div>
<div class="t" style="left:1641.59px;top:258.86px;font-size:10.80px;line-height:10.80px;color:#e6e6e6;">color:</div>
<div class="t" style="left:1631.38px;top:286.86px;font-size:10.80px;line-height:10.80px;color:#e6e6e6;">indices:</div>
<div class="t" style="left:1606.16px;top:315.86px;font-size:10.80px;line-height:10.80px;color:#e6e6e6;">interpolation:</div>
<div class="r" style="left:1683px;top:224px;width:201px;height:21px;border-radius:3px;background:#22252e"></div>
<div class="t" style="left:1690.00px;top:231.15px;font-size:10.46px;line-height:10.46px;color:#9a9da6;">None</div>
<div class="r" style="left:1684px;top:253px;width:200px;height:20px;border-radius:3px;background:#4f5366"></div>
<div class="t" style="left:1691.00px;top:258.10px;font-size:11.69px;line-height:11.69px;color:#e6e6e6;">[0, 0, 1]</div>
<div class="r" style="left:1684px;top:281px;width:200px;height:20px;border-radius:3px;background:#4f5366"></div>
<div class="t" style="left:1691.00px;top:286.10px;font-size:11.70px;line-height:11.70px;color:#e6e6e6;">[]</div>
<div class="r" style="left:1684px;top:309px;width:200px;height:26px;border-radius:3px;background:#4f5366;overflow:hidden"><div class="r" style="left:175px;top:0;width:25px;height:26px;background:#3d4051"></div></div>
<svg class="r" style="left:1867px;top:319px" width="9" height="7" viewBox="0 0 9 7"><path d="M0.5 0.5 H8.5 L4.5 6.5 Z" fill="#f0f0f0"/></svg>
<div class="t" style="left:1688.00px;top:317.38px;font-size:11.37px;line-height:11.37px;color:#e6e6e6;">constant</div>
<div class="r" style="left:1593px;top:350px;width:303px;height:65px;border-radius:4px;background:#2e313c;overflow:hidden"><div class="r" style="left:0;top:0;width:303px;height:25px;background:#22252e"></div></div>
<div class="t" style="left:1606.00px;top:357.90px;font-size:10.75px;line-height:10.75px;color:#f0f0f0;">Outputs</div>
<div class="t" style="left:1604.00px;top:390.86px;font-size:10.80px;line-height:10.80px;color:#e6e6e6;">prim:</div>
<div class="r" style="left:1643px;top:384px;width:241px;height:22px;border-radius:3px;background:#22252e"></div>
<div class="t" style="left:1650.00px;top:391.15px;font-size:10.46px;line-height:10.46px;color:#9a9da6;">None</div>
<div class="r" style="left:0px;top:829px;width:1907px;height:21px;border:1px solid #262833;border-radius:3px 3px 0 0;"></div>
<div class="t" style="left:8.60px;top:836.74px;font-size:11.88px;line-height:11.88px;color:#e6e6e6;transform:scale(1.000,1.1);transform-origin:0 10.06px;">Logger</div>
<svg class="r" style="left:1897px;top:835px" width="10" height="10" viewBox="0 0 10 10"><rect x="0.75" y="0.75" width="8.5" height="8.5" rx="2.2" fill="#2c2e39" stroke="#babcc3" stroke-width="1.5"/><path d="M2.9 7.1 L6.2 3.8" fill="none" stroke="#e6e6ea" stroke-width="1"/><path d="M4.2 3 H7 V5.8 Z" fill="#e8f0ee"/></svg>
<div class="r" style="left:3px;top:866px;width:1902px;height:132px;border-radius:3px;background:#2d313b;box-shadow:0 1px 0 #22252e"></div>
<div class="r" style="left:1860px;top:1005px;width:45px;height:23px;border-radius:4px;background:#2d313b"></div>
<div class="t" style="left:1869.30px;top:1012.95px;font-size:10.46px;line-height:10.46px;color:#e6e6e6;">Clear</div>
</body></html>
